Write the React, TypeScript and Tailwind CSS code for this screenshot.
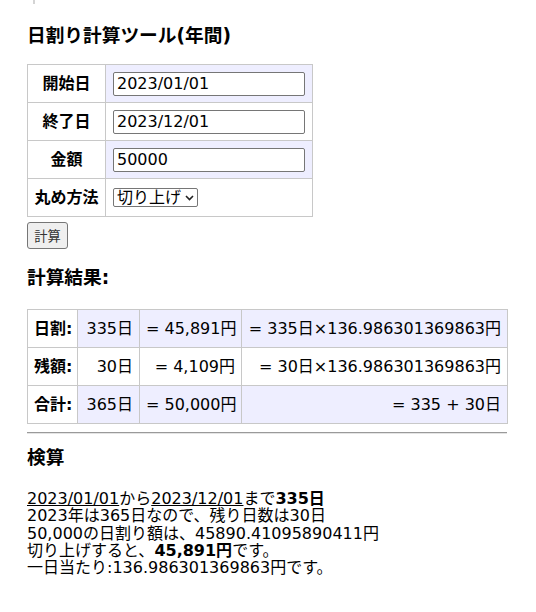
import React from 'react';

const cell = 'border border-[#c8c8c8]';

function TextInput({ value }: { value: string }) {
  return (
    <input
      defaultValue={value}
      className="w-[192px] h-[24px] border border-[#767676] rounded-[2px] bg-white px-[3px] text-[16px] text-black outline-none"
    />
  );
}

export default function App() {
  const rows = [
    { label: '日割:', days: '335日', amount: '= 45,891円', calc: '= 335日×136.986301369863円', shade: true },
    { label: '残額:', days: '30日', amount: '= 4,109円', calc: '= 30日×136.986301369863円', shade: false },
    { label: '合計:', days: '365日', amount: '= 50,000円', calc: '= 335 + 30日', shade: true },
  ];

  return (
    <div className="min-h-[612px] w-[536px] bg-white text-black font-['DejaVu_Sans','Noto_Sans_CJK_JP',sans-serif] text-[16px]">
      <div className="pl-[27px]">
        {/* speck at the top edge */}
        <div className="ml-[6px] h-[4px] w-[2px] bg-[#d4d4d4]" />

        <h3 className="mt-[20px] text-[18.7px] leading-[24px] font-bold">日割り計算ツール(年間)</h3>

        {/* Input form */}
        <table className="mt-[16px] w-[286px] border-collapse table-fixed">
          <tbody>
            <tr>
              <th className={`${cell} w-[78px] h-[38px] text-center font-bold`}>開始日</th>
              <td className={`${cell} bg-[#eeeeff] pl-[7px]`}>
                <TextInput value="2023/01/01" />
              </td>
            </tr>
            <tr>
              <th className={`${cell} h-[38px] text-center font-bold`}>終了日</th>
              <td className={`${cell} bg-white pl-[7px]`}>
                <TextInput value="2023/12/01" />
              </td>
            </tr>
            <tr>
              <th className={`${cell} h-[38px] text-center font-bold`}>金額</th>
              <td className={`${cell} bg-[#eeeeff] pl-[7px]`}>
                <TextInput value="50000" />
              </td>
            </tr>
            <tr>
              <th className={`${cell} h-[38px] text-center font-bold whitespace-nowrap`}>丸め方法</th>
              <td className={`${cell} bg-white pl-[7px]`}>
                <div className="relative inline-flex items-center h-[19px] w-[85px] border border-[#767676] rounded-[2px] bg-white">
                  <select className="appearance-none h-full w-full bg-transparent pl-[3px] text-[16px] leading-[17px] outline-none">
                    <option>切り上げ</option>
                    <option>切り捨て</option>
                    <option>四捨五入</option>
                  </select>
                  <svg
                    className="pointer-events-none absolute right-[3px] top-[6px]"
                    width="9"
                    height="6"
                    viewBox="0 0 9 6"
                    fill="none"
                  >
                    <path d="M1 1l3.5 3.5L8 1" stroke="#222" strokeWidth="1.6" />
                  </svg>
                </div>
              </td>
            </tr>
          </tbody>
        </table>

        <button className="mt-[5px] h-[27px] w-[41px] border border-[#767676] rounded-[3px] bg-[#efefef] font-['Noto_Sans_CJK_JP',sans-serif] text-[13.3px] text-[#333]">
          計算
        </button>

        <h3 className="mt-[17px] text-[18.7px] leading-[24px] font-bold">計算結果:</h3>

        {/* Result table */}
        <table className="mt-[19px] w-[480px] border-collapse table-fixed">
          <colgroup>
            <col className="w-[50px]" />
            <col className="w-[62px]" />
            <col className="w-[102px]" />
            <col className="w-[266px]" />
          </colgroup>
          <tbody>
            {rows.map((r) => (
              <tr key={r.label}>
                <th className={`${cell} h-[38px] pl-[6px] text-left font-bold bg-white whitespace-nowrap`}>{r.label}</th>
                <td className={`${cell} px-[6px] text-right whitespace-nowrap ${r.shade ? 'bg-[#eeeeff]' : 'bg-white'}`}>{r.days}</td>
                <td className={`${cell} px-[6px] text-right whitespace-nowrap ${r.shade ? 'bg-[#eeeeff]' : 'bg-white'}`}>{r.amount}</td>
                <td className={`${cell} px-[6px] text-right whitespace-nowrap ${r.shade ? 'bg-[#eeeeff]' : 'bg-white'}`}>{r.calc}</td>
              </tr>
            ))}
          </tbody>
        </table>

        <hr className="mt-[8px] w-[480px] border-t border-t-[#9a9a9a] border-b border-b-[#e4e4e4]" />

        <h3 className="mt-[12px] text-[18.7px] leading-[24px] font-bold">検算</h3>

        {/* Verification */}
        <div className="mt-[20px] leading-[17.25px]">
          <div>
            <span className="underline">2023/01/01</span>から<span className="underline">2023/12/01</span>まで
            <b>335日</b>
          </div>
          <div>2023年は365日なので、残り日数は30日</div>
          <div>50,000の日割り額は、45890.41095890411円</div>
          <div>
            切り上げすると、<b>45,891円</b>です。
          </div>
          <div>一日当たり:136.986301369863円です。</div>
        </div>
      </div>
    </div>
  );
}
